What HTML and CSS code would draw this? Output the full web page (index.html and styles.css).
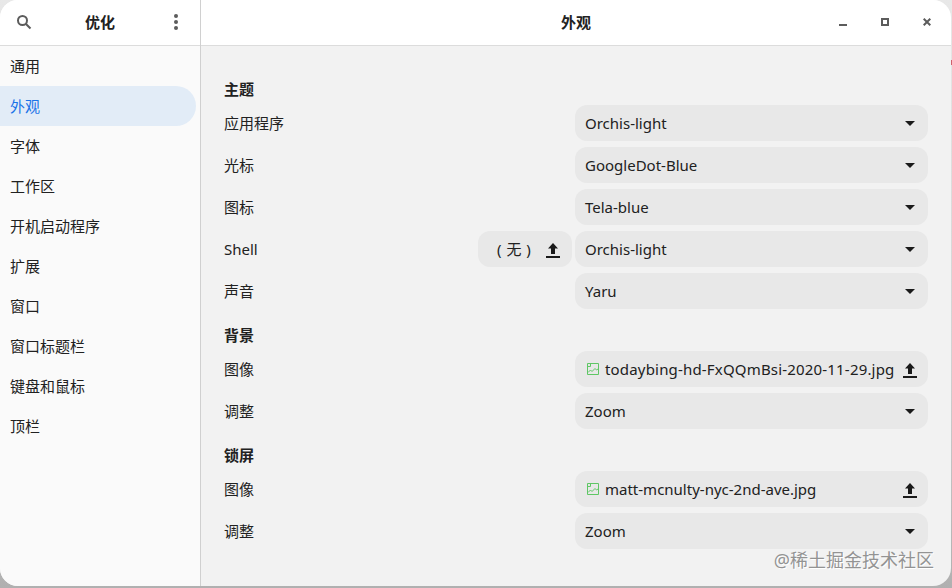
FILE: index.html
```html
<!DOCTYPE html>
<html lang="zh-CN">
<head>
    <meta charset="UTF-8">
    <meta name="viewport" content="width=device-width, initial-scale=1.0">
    <title>优化</title>
    <link rel="stylesheet" href="styles.css">
</head>
<body>
    <svg width="0" height="0" class="icon-defs">
        <symbol id="icon-arrow" viewBox="0 0 10 5"><path d="M0 0h10L5 5z"/></symbol>
        <symbol id="icon-upload" viewBox="0 0 14 15"><path d="M7 0l5 5.500H9V11H5V5.500H2zM0 13h14v2H0z"/></symbol>
        <symbol id="icon-image" viewBox="0 0 12 12">
            <path d="M.5.5h11v11H.5zM1 9.500l2.500-2.500 1.500 1.500L8 5.500l1.500 1.500L11 6M1 3.500h2.500V1" fill="none" stroke="#5fc765"/>
        </symbol>
    </svg>

    <div class="window">
        <aside class="sidebar">
            <header class="titlebar sidebar-title">
                <button class="icon-btn">
                    <svg width="16" height="16" viewBox="0 0 16 16" fill="none" stroke="#5c5c5c" stroke-width="2"><circle cx="6.500" cy="6.500" r="4.500"/><path d="M9.700 9.700L14.500 14.500"/></svg>
                </button>
                <h1>优化</h1>
                <button class="icon-btn">
                    <svg width="4" height="16" viewBox="0 0 4 16" fill="#5c5c5c"><circle cx="2" cy="2" r="2"/><circle cx="2" cy="8" r="2"/><circle cx="2" cy="14" r="2"/></svg>
                </button>
            </header>
            <nav class="nav">
                <a>通用</a>
                <a class="active">外观</a>
                <a>字体</a>
                <a>工作区</a>
                <a>开机启动程序</a>
                <a>扩展</a>
                <a>窗口</a>
                <a>窗口标题栏</a>
                <a>键盘和鼠标</a>
                <a>顶栏</a>
            </nav>
        </aside>

        <main class="main">
            <header class="titlebar main-title">
                <h1>外观</h1>
                <div class="window-controls">
                    <svg width="8" height="8" viewBox="0 0 8 8"><path d="M0 6h8v2H0z" fill="#5c5c5c"/></svg>
                    <svg width="8" height="8" viewBox="0 0 8 8"><path d="M1 1h6v6H1z" fill="none" stroke="#5c5c5c" stroke-width="2"/></svg>
                    <svg width="8" height="8" viewBox="0 0 8 8"><path d="M.7.7l6.600 6.600M7.300.7L.7 7.300" stroke="#5c5c5c" stroke-width="2"/></svg>
                </div>
            </header>

            <div class="content">
                <h2>主题</h2>
                <div class="row">
                    <label>应用程序</label>
                    <div class="control">Orchis-light<svg class="arrow"><use href="#icon-arrow"/></svg></div>
                </div>
                <div class="row">
                    <label>光标</label>
                    <div class="control">GoogleDot-Blue<svg class="arrow"><use href="#icon-arrow"/></svg></div>
                </div>
                <div class="row">
                    <label>图标</label>
                    <div class="control">Tela-blue<svg class="arrow"><use href="#icon-arrow"/></svg></div>
                </div>
                <div class="row">
                    <label>Shell</label>
                    <div class="control file-none"><span>( 无 )</span><svg class="upload"><use href="#icon-upload"/></svg></div>
                    <div class="control">Orchis-light<svg class="arrow"><use href="#icon-arrow"/></svg></div>
                </div>
                <div class="row">
                    <label>声音</label>
                    <div class="control">Yaru<svg class="arrow"><use href="#icon-arrow"/></svg></div>
                </div>

                <h2>背景</h2>
                <div class="row">
                    <label>图像</label>
                    <div class="control"><svg class="image"><use href="#icon-image"/></svg><span class="filename">todaybing-hd-FxQQmBsi-2020-11-29.jpg</span><svg class="upload"><use href="#icon-upload"/></svg></div>
                </div>
                <div class="row">
                    <label>调整</label>
                    <div class="control">Zoom<svg class="arrow"><use href="#icon-arrow"/></svg></div>
                </div>

                <h2>锁屏</h2>
                <div class="row">
                    <label>图像</label>
                    <div class="control"><svg class="image"><use href="#icon-image"/></svg><span>matt-mcnulty-nyc-2nd-ave.jpg</span><svg class="upload"><use href="#icon-upload"/></svg></div>
                </div>
                <div class="row">
                    <label>调整</label>
                    <div class="control">Zoom<svg class="arrow"><use href="#icon-arrow"/></svg></div>
                </div>
            </div>
        </main>
    </div>

    <div class="edge-mark"></div>
    <div class="watermark">@稀土掘金技术社区</div>
</body>
</html>
```
FILE: styles.css
```css
* {
    box-sizing: border-box;
}
body {
    margin: 0;
    height: 588px;
    overflow: hidden;
    background: linear-gradient(#e8e8e8, #d2d2d2 60%, #b0b0b0);
    font-family: "Noto Sans", "Noto Sans CJK SC", sans-serif;
    font-size: 15px;
    line-height: 20px;
    color: #212121;
}
h1, h2 {
    margin: 0;
    font-size: 15px;
    font-weight: bold;
}
.icon-defs {
    position: absolute;
}
.window {
    display: flex;
    width: 951px;
    height: 586px;
    border-radius: 18px;
    overflow: hidden;
    background: #f2f2f2;
}
.titlebar {
    display: flex;
    align-items: center;
    height: 46px;
    padding-bottom: 1px;
    background: #fff;
    border-bottom: 1px solid #dcdcdc;
}
.sidebar {
    width: 201px;
    background: #fafafa;
    border-right: 1px solid #d0d0d0;
}
.sidebar-title {
    justify-content: space-between;
    padding-left: 12px;
    padding-right: 12px;
}
.icon-btn {
    display: flex;
    align-items: center;
    justify-content: center;
    width: 24px;
    height: 24px;
    padding: 0;
    border: none;
    background: none;
}
.nav a {
    display: flex;
    align-items: center;
    height: 40px;
    width: 196px;
    padding-left: 10px;
    border-radius: 0 20px 20px 0;
}
.nav .active {
    background: #e2ecf7;
    color: #1a73e8;
}
.main {
    flex: 1;
}
.main-title {
    display: grid;
    grid-template-columns: 1fr auto 1fr;
}
.main-title h1 {
    grid-column: 2;
}
.window-controls {
    display: flex;
    justify-content: flex-end;
    gap: 34px;
    padding-right: 20px;
}
.content {
    padding: 33px 23px 0;
}
.content h2 {
    margin-bottom: 6px;
}
.row {
    display: flex;
    align-items: center;
    gap: 3px;
    height: 36px;
    margin-bottom: 6px;
}
.row + h2 {
    margin-top: 16px;
}
.row label {
    flex: 1;
}
.control {
    display: flex;
    align-items: center;
    width: 353px;
    height: 36px;
    padding: 0 11px 0 10px;
    border-radius: 12px;
    background: #e8e8e8;
    white-space: nowrap;
}
.control svg {
    fill: #1a1a1a;
}
.file-none {
    width: 94px;
    padding-left: 19px;
    padding-right: 12px;
    word-spacing: 1px;
}
.filename {
    letter-spacing: 0.18px;
}
.arrow {
    width: 10px;
    height: 5px;
    margin-left: auto;
    margin-right: 2px;
}
.upload {
    width: 14px;
    height: 15px;
    margin-left: auto;
    margin-top: 2px;
}
.image {
    width: 12px;
    height: 12px;
    margin: 0 6px 0 2px;
}
.edge-mark {
    position: absolute;
    top: 60px;
    right: 0;
    width: 1px;
    height: 5px;
    background: #d0606c;
}
.watermark {
    position: absolute;
    right: 18px;
    bottom: 16px;
    font-size: 18px;
    line-height: 24px;
    font-weight: 400;
    color: #939393;
    text-shadow: 1px 1px 0 #fff;
}
```
